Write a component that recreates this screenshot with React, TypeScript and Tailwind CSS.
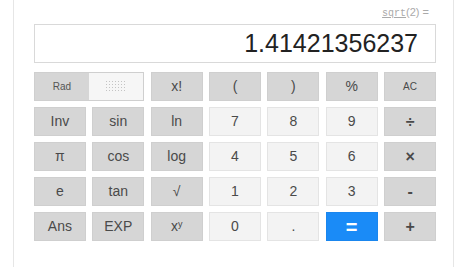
import React from 'react';

type Key = { label: React.ReactNode; kind: 'fn' | 'num' | 'eq'; small?: boolean; op?: boolean };

const ROWS: Key[][] = [
  [
    { label: 'x!', kind: 'fn' },
    { label: '(', kind: 'fn' },
    { label: ')', kind: 'fn' },
    { label: '%', kind: 'fn' },
    { label: 'AC', kind: 'fn', small: true },
  ],
  [
    { label: 'Inv', kind: 'fn' },
    { label: 'sin', kind: 'fn' },
    { label: 'ln', kind: 'fn' },
    { label: '7', kind: 'num' },
    { label: '8', kind: 'num' },
    { label: '9', kind: 'num' },
    { label: '÷', kind: 'fn', op: true },
  ],
  [
    { label: 'π', kind: 'fn' },
    { label: 'cos', kind: 'fn' },
    { label: 'log', kind: 'fn' },
    { label: '4', kind: 'num' },
    { label: '5', kind: 'num' },
    { label: '6', kind: 'num' },
    { label: '×', kind: 'fn', op: true },
  ],
  [
    { label: 'e', kind: 'fn' },
    { label: 'tan', kind: 'fn' },
    { label: '√', kind: 'fn' },
    { label: '1', kind: 'num' },
    { label: '2', kind: 'num' },
    { label: '3', kind: 'num' },
    { label: '-', kind: 'fn', op: true },
  ],
  [
    { label: 'Ans', kind: 'fn' },
    { label: 'EXP', kind: 'fn' },
    {
      label: (
        <span>
          x<sup className="text-[9px] top-[-0.45em]">y</sup>
        </span>
      ),
      kind: 'fn',
    },
    { label: '0', kind: 'num' },
    { label: '.', kind: 'num' },
    { label: '=', kind: 'eq' },
    { label: '+', kind: 'fn', op: true },
  ],
];

const styles = {
  fn: 'bg-[#d6d6d6] border border-[#cfcfcf] text-[#4a4a4a]',
  num: 'bg-[#f3f3f3] border border-[#e4e4e4] text-[#4a4a4a]',
  eq: 'bg-[#1a8bf7] border border-[#1a86ee] text-white font-bold text-[20px]',
};

const Button: React.FC<{ k: Key }> = ({ k }) => (
  <div
    className={`h-[29px] flex items-center justify-center ${styles[k.kind]} ${
      k.small ? 'text-[10px]' : k.op ? 'text-[16px] font-bold' : k.kind === 'eq' ? '' : 'text-[14px]'
    }`}
  >
    {k.label}
  </div>
);

const App: React.FC = () => {
  return (
    <div className="w-[474px] h-[267px] bg-white overflow-hidden font-['Liberation_Sans',Arial,sans-serif]">
      <div className="ml-[13px] w-[441px] h-[267px] border-x border-[#e6e6e6] pl-[20px] pr-[17px] pt-[5px]">
        {/* Expression */}
        <div className="h-[15px] mb-[4px] text-right pr-[7px] text-[11px] leading-[15px] text-[#aaa]">
          <span className="font-['Liberation_Mono',monospace] underline text-[10px]">sqrt</span>(2) =
        </div>

        {/* Display */}
        <div className="h-[39px] border border-[#d9d9d9] flex items-center justify-end pr-[17px] text-[25px] text-[#222] leading-none">
          1.41421356237
        </div>

        {/* Keypad */}
        <div className="mt-[9px] grid grid-cols-7 gap-x-[6.5px] gap-y-[6px]">
          {/* Rad / Deg toggle */}
          <div className="col-span-2 h-[29px] flex border border-[#cfcfcf]">
            <div className="w-[54px] bg-[#d6d6d6] flex items-center justify-center text-[10px] text-[#555]">
              Rad
            </div>
            <div className="flex-1 bg-[#f6f6f6] flex items-center justify-center">
              <div className="w-[22px] h-[13px] bg-[radial-gradient(circle,#c4c4c4_0.8px,transparent_1px)] bg-[length:3px_3px]" />
            </div>
          </div>
          {ROWS.flat().map((k, i) => (
            <Button key={i} k={k} />
          ))}
        </div>
      </div>
    </div>
  );
};

export default App;
